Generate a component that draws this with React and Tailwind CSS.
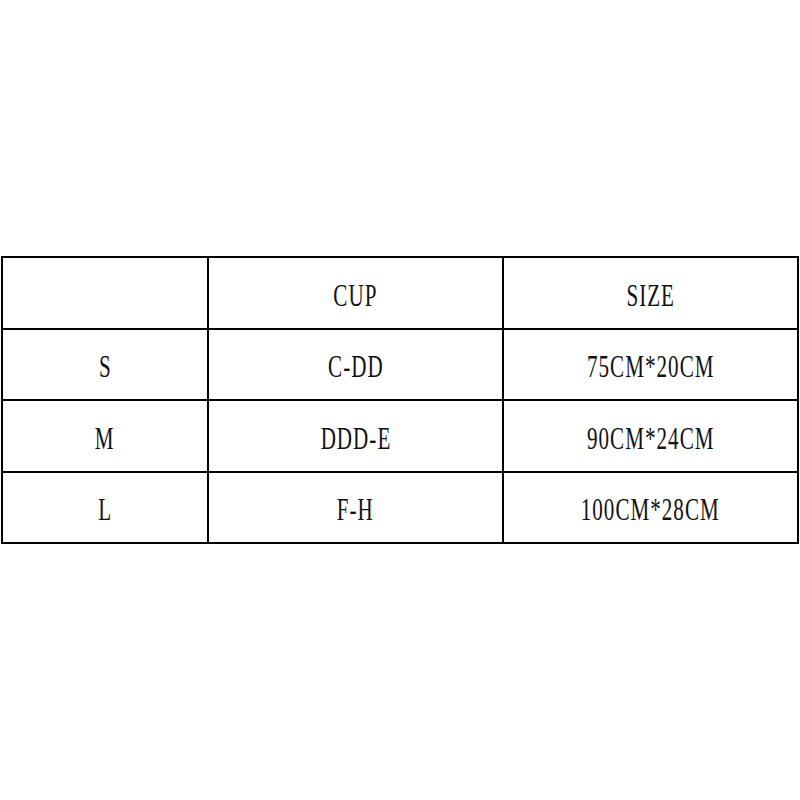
import React from "react";

const rows = [
  ["", "CUP", "SIZE"],
  ["S", "C-DD", "75CM*20CM"],
  ["M", "DDD-E", "90CM*24CM"],
  ["L", "F-H", "100CM*28CM"],
];

function App() {
  return (
    <div className="w-[800px] h-[800px] bg-white pt-[256px] pl-px">
      <table className="border-collapse font-['Liberation_Serif',serif] text-[31px] leading-none text-[#111]">
        <colgroup>
          <col className="w-[206px]" />
          <col className="w-[295px]" />
          <col className="w-[295px]" />
        </colgroup>
        <tbody>
          {rows.map((row, i) => (
            <tr key={i} className="h-[71.5px]">
              {row.map((cell, j) => (
                <td key={j} className="border-2 border-black text-center align-middle p-0">
                  <span className="inline-block scale-x-[0.68] tracking-[1.5px] pt-[5px] whitespace-nowrap">
                    {cell}
                  </span>
                </td>
              ))}
            </tr>
          ))}
        </tbody>
      </table>
    </div>
  );
}

export default App;
